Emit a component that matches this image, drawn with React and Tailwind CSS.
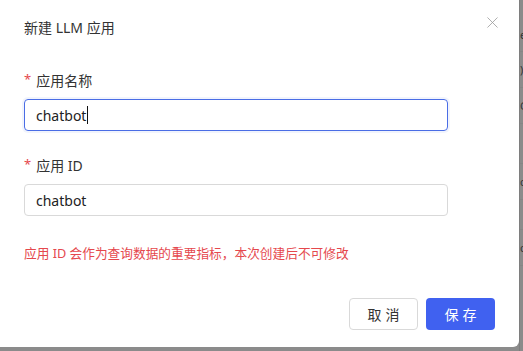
import { X } from "lucide-react";

const font = { fontFamily: '"Noto Sans", "Noto Sans CJK SC", sans-serif' };

const Field = ({ label, value, focused }) => (
  <div className="flex flex-col">
    <label className="flex items-center h-5 text-[14px] text-[#333]">
      <span className="text-[#e5484d] mr-[5px] text-[13px]">*</span>
      {label}
    </label>
    <div
      className={
        "mt-[9px] h-8 w-[424px] rounded-[4px] border px-[11px] flex items-center text-[14px] text-[#222] " +
        (focused
          ? "border-[#4a6de5] shadow-[0_0_0_2px_rgba(74,109,229,0.08)]"
          : "border-[#d9d9d9]")
      }
    >
      {value}
      {focused && <span className="ml-[1px] w-px h-[18px] bg-[#111]" />}
    </div>
  </div>
);

export default function App() {
  return (
    <div className="w-[523px] h-[351px] bg-[#8b8b8b] flex overflow-hidden" style={font}>
      <div className="flex flex-col">
        <div className="w-[519px] h-[347px] bg-white rounded-br-md flex flex-col px-6 relative">
          {/* Header */}
          <div className="pt-[17px] h-[70px] text-[14px] text-[#333]">新建 LLM 应用</div>
          <button className="absolute right-[17px] top-[13px] text-[#999]">
            <X size={19} strokeWidth={1} />
          </button>

          <Field label="应用名称" value="chatbot" focused />
          <div className="h-[24px]" />
          <Field label="应用 ID" value="chatbot" />

          <p className="mt-[28px] text-[12.7px] leading-[18px] text-[#e5484d]">
            应用 ID 会作为查询数据的重要指标，本次创建后不可修改
          </p>

          {/* Footer */}
          <div className="mt-auto mb-[17px] flex justify-end gap-2">
            <button className="w-[69px] h-8 rounded-[4px] border border-[#d9d9d9] bg-white text-[14px] text-[#333] tracking-[4px] pl-1">
              取消
            </button>
            <button className="w-[69px] h-8 rounded-[4px] bg-[#4061f0] text-[14px] text-white tracking-[4px] pl-1">
              保存
            </button>
          </div>
        </div>
      </div>

      {/* dimmed page behind */}
      <div className="flex-1 flex flex-col border-l border-[#7e7e7e] text-[11px] text-[#333] leading-none overflow-hidden">
        <div className="h-[52px] pt-[29px] border-b border-[#858585]">e</div>
        <div className="h-[36px] pt-[12px] border-b border-[#858585]">)</div>
        <div className="h-[36px] pt-[12px] border-b border-[#858585]">G</div>
        <div className="h-[40px] border-b border-[#858585]" />
        <div className="h-[36px] pt-[12px] border-b border-[#858585]">c</div>
        <div className="h-[30px] border-b border-[#858585]" />
        <div className="h-[36px] pt-[12px] border-b border-[#858585]">c</div>
      </div>
    </div>
  );
}
